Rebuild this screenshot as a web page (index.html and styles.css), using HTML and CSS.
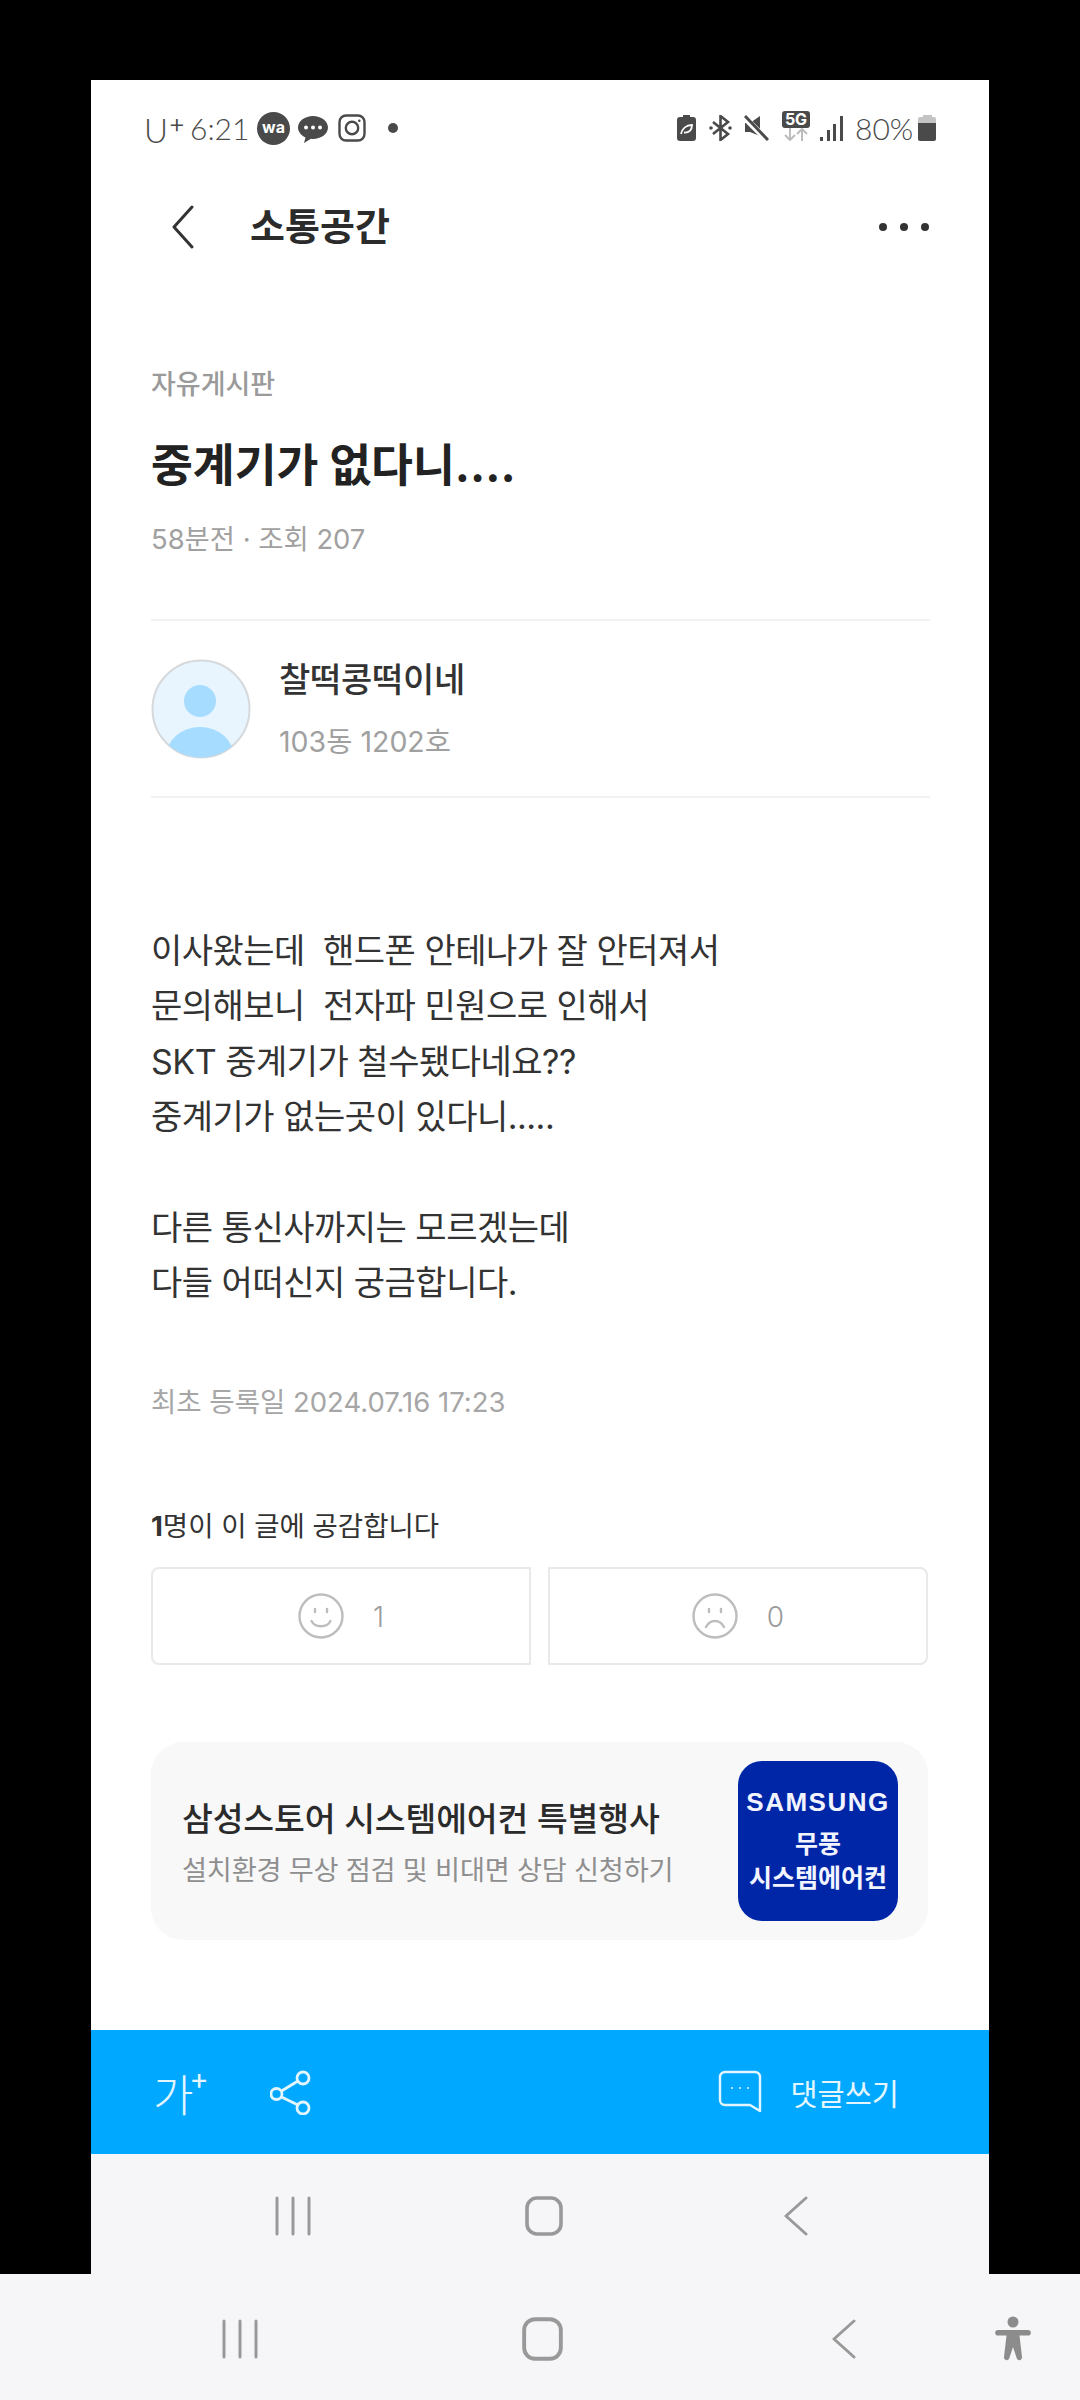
FILE: index.html
```html
<!DOCTYPE html>
<html lang="ko">

<head>
    <meta charset="UTF-8">
    <meta name="viewport" content="width=device-width, initial-scale=1.0">
    <title>소통공간</title>
    <link rel="stylesheet" href="styles.css">
</head>

<body>

    <div class="screen">

        <div class="status-bar">
            <div class="status-left">
                <span class="carrier">U<span class="carrier-plus">+</span></span>
                <span class="clock">6:21</span>
                <span class="wa-badge">wa</span>
                <svg class="talk-icon" viewBox="0 0 30 30">
                    <path d="M15 3C7 3 0 8 0 14.500C0 19 3.500 22.500 7.500 24.500L6 30L13 25.800C13.700 25.900 14.300 26 15 26C23 26 30 21 30 14.500S23 3 15 3Z" fill="#4a4a4a" />
                    <circle cx="8" cy="14.500" r="2" fill="#fff" />
                    <circle cx="15" cy="14.500" r="2" fill="#fff" />
                    <circle cx="22" cy="14.500" r="2" fill="#fff" />
                </svg>
                <svg class="insta-icon" viewBox="0 0 28 28" fill="none" stroke="#4a4a4a" stroke-width="2.400">
                    <rect x="1.500" y="1.500" width="25" height="25" rx="6.500" />
                    <circle cx="14" cy="14" r="6.200" />
                    <circle cx="21.300" cy="6.700" r="1.300" fill="#4a4a4a" stroke="none" />
                </svg>
                <span class="status-dot"></span>
            </div>
            <div class="status-right">
                <svg class="leaf-battery" viewBox="0 0 19 26">
                    <path d="M6 0H13V2H16A3 3 0 0 1 19 5V23A3 3 0 0 1 16 26H3A3 3 0 0 1 0 23V5A3 3 0 0 1 3 2H6Z" fill="#4a4a4a" />
                    <path d="M4 19C5 14 9 10 15 10C15 15 12 18 7 17.500" fill="none" stroke="#fff" stroke-width="1.800" />
                </svg>
                <svg class="bt-icon" viewBox="0 0 23 26" fill="none" stroke="#4a4a4a" stroke-width="2.600">
                    <path d="M4 7L19 19L11.500 25V1L19 7L4 19" />
                    <circle cx="2" cy="13" r="1.800" fill="#4a4a4a" stroke="none" />
                    <circle cx="21" cy="13" r="1.800" fill="#4a4a4a" stroke="none" />
                </svg>
                <svg class="mute-icon" viewBox="0 0 25 26">
                    <path d="M1 8H6L16 1V21L6 17H1Z" fill="#4a4a4a" />
                    <path d="M1 3L23 25" stroke="#fff" stroke-width="6" />
                    <path d="M1 1L24 25" stroke="#4a4a4a" stroke-width="3" />
                </svg>
                <div class="net-type">
                    <span class="net-label">5G</span>
                    <svg class="net-arrows" viewBox="0 0 28 13" fill="none" stroke="#bdbdbd" stroke-width="2">
                        <path d="M8 0V12M3 7L8 12L13 7" />
                        <path d="M20 13V1M15 6L20 1L25 6" />
                    </svg>
                </div>
                <div class="signal">
                    <span class="signal-bar bar-1"></span>
                    <span class="signal-bar bar-2"></span>
                    <span class="signal-bar bar-3"></span>
                    <span class="signal-bar bar-4"></span>
                </div>
                <span class="battery-text">80%</span>
                <div class="battery">
                    <span class="battery-cap"></span>
                    <span class="battery-empty"></span>
                    <span class="battery-full"></span>
                </div>
            </div>
        </div>

        <div class="app-header">
            <svg class="back-icon" viewBox="0 0 22 44" fill="none" stroke="#333" stroke-width="3" stroke-linecap="round" stroke-linejoin="round">
                <path d="M20 2L2 22L20 42" />
            </svg>
            <h1 class="app-title">소통공간</h1>
            <div class="more-dots">
                <span></span>
                <span></span>
                <span></span>
            </div>
        </div>

        <div class="content">
            <p class="category">자유게시판</p>
            <h2 class="post-title">중계기가 없다니....</h2>
            <p class="post-meta">58분전 · 조회 207</p>

            <div class="author">
                <svg class="avatar" viewBox="0 0 100 100">
                    <defs>
                        <clipPath id="avatar-clip">
                            <circle cx="50" cy="50" r="48.500" />
                        </clipPath>
                    </defs>
                    <circle cx="50" cy="50" r="48.500" fill="#e8f5fe" stroke="#d6d9dc" stroke-width="2" />
                    <circle cx="49" cy="42" r="16" fill="#a6dcff" />
                    <ellipse cx="49" cy="98" rx="34" ry="30" fill="#a6dcff" clip-path="url(#avatar-clip)" />
                </svg>
                <div class="author-info">
                    <p class="author-name">찰떡콩떡이네</p>
                    <p class="author-home">103동 1202호</p>
                </div>
            </div>

            <p class="post-body">이사왔는데  핸드폰 안테나가 잘 안터져서
문의해보니  전자파 민원으로 인해서
SKT 중계기가 철수됐다네요??
중계기가 없는곳이 있다니.....

다른 통신사까지는 모르겠는데
다들 어떠신지 궁금합니다.</p>

            <p class="post-date">최초 등록일 2024.07.16 17:23</p>

            <p class="like-summary"><strong>1</strong>명이 이 글에 공감합니다</p>
            <div class="reactions">
                <div class="reaction reaction-like">
                    <svg class="face-icon" viewBox="0 0 46 46" fill="none" stroke="#bdbdbd" stroke-width="2.400" stroke-linecap="round">
                        <circle cx="23" cy="23" r="21.500" />
                        <path d="M17 16V19M29 16V19" />
                        <path d="M13.500 28C17 35 29 35 32.500 28" />
                    </svg>
                    <span class="reaction-count">1</span>
                </div>
                <div class="reaction reaction-dislike">
                    <svg class="face-icon" viewBox="0 0 46 46" fill="none" stroke="#bdbdbd" stroke-width="2.400" stroke-linecap="round">
                        <circle cx="23" cy="23" r="21.500" />
                        <path d="M17 16V19M29 16V19" />
                        <path d="M14 34C18 26 28 26 32 34" />
                    </svg>
                    <span class="reaction-count">0</span>
                </div>
            </div>

            <div class="promo-card">
                <div class="promo-text">
                    <p class="promo-title">삼성스토어 시스템에어컨 특별행사</p>
                    <p class="promo-sub">설치환경 무상 점검 및 비대면 상담 신청하기</p>
                </div>
                <div class="promo-thumb">
                    <span class="thumb-brand">SAMSUNG</span>
                    <span class="thumb-line">무풍</span>
                    <span class="thumb-line">시스템에어컨</span>
                </div>
            </div>
        </div>

        <div class="action-bar">
            <div class="font-size-btn">
                <span class="font-size-char">가</span>
                <span class="font-size-plus">+</span>
            </div>
            <svg class="share-icon" viewBox="0 0 42 46" fill="none" stroke="#e3f6ff" stroke-width="2.800">
                <circle cx="33" cy="9" r="6" />
                <circle cx="6.500" cy="25" r="5.500" />
                <circle cx="33" cy="39" r="6" />
                <path d="M11.500 22L28 12M11.500 28L28 36" />
            </svg>
            <div class="comment-btn">
                <svg class="comment-icon" viewBox="0 0 44 44" fill="none" stroke="#e3f6ff" stroke-width="2.400" stroke-linejoin="round">
                    <path d="M7 2H37A5 5 0 0 1 42 7V41L32 35H7A5 5 0 0 1 2 30V7A5 5 0 0 1 7 2Z" />
                    <circle cx="14" cy="18" r="1" fill="#e3f6ff" stroke="none" />
                    <circle cx="22" cy="18" r="1" fill="#e3f6ff" stroke="none" />
                    <circle cx="30" cy="18" r="1" fill="#e3f6ff" stroke="none" />
                </svg>
                <span class="comment-label">댓글쓰기</span>
            </div>
        </div>

        <div class="inner-nav">
            <svg class="nav-bars" viewBox="0 0 36 40" fill="none" stroke="#999" stroke-width="3" stroke-linecap="round">
                <path d="M2 2V38M18 2V38M34 2V38" />
            </svg>
            <svg class="nav-home" viewBox="0 0 38 40" fill="none" stroke="#999" stroke-width="3.600">
                <rect x="2" y="2" width="34" height="36" rx="10" />
            </svg>
            <svg class="nav-back" viewBox="0 0 24 40" fill="none" stroke="#999" stroke-width="3" stroke-linecap="round" stroke-linejoin="round">
                <path d="M22 2L2 20L22 38" />
            </svg>
        </div>
    </div>

    <div class="outer-nav">
        <svg class="nav-bars nav-big" viewBox="0 0 36 40" fill="none" stroke="#999" stroke-width="3" stroke-linecap="round">
            <path d="M2 2V38M18 2V38M34 2V38" />
        </svg>
        <svg class="nav-home nav-big" viewBox="0 0 38 40" fill="none" stroke="#999" stroke-width="3.600" preserveAspectRatio="none">
            <rect x="2" y="2" width="34" height="36" rx="10" />
        </svg>
        <svg class="nav-back nav-big" viewBox="0 0 24 40" fill="none" stroke="#999" stroke-width="3" stroke-linecap="round" stroke-linejoin="round">
            <path d="M22 2L2 20L22 38" />
        </svg>
        <svg class="a11y-icon" viewBox="0 0 36 46" fill="#8c8c8c">
            <circle cx="18" cy="6" r="5.500" />
            <path d="M3 14H33A2.800 2.800 0 0 1 33 19.600H24.500L27 41A2.800 2.800 0 0 1 22 43L18 31L14 43A2.800 2.800 0 0 1 9 41L11.500 19.600H3A2.800 2.800 0 0 1 3 14Z" />
        </svg>
    </div>

</body>

</html>
```

FILE: styles.css
```css
* {
    margin: 0;
    padding: 0;
    box-sizing: border-box;
    font-family: Inter, "Noto Sans CJK KR", sans-serif;
}


body {
    background-color: #000;
    width: 1080px;
    height: 2400px;
    overflow: hidden;
    padding-top: 80px;
}


.screen {
    width: 898px;
    height: 2194px;
    margin-left: 91px;
    background-color: #fff;
}


/* status bar */
.status-bar {
    height: 96px;
    padding: 0 53px 0 53px;
    display: flex;
    align-items: center;
    justify-content: space-between;
}


.status-left,
.status-right {
    display: flex;
    align-items: center;
}


.carrier,
.clock,
.battery-text {
    font-family: Lato, sans-serif;
    font-weight: 300;
    font-size: 30px;
    color: #4a4a4a;
}


.carrier {
    width: 46px;
    font-size: 33px;
}


.carrier-plus {
    font-size: 27px;
    vertical-align: 10px;
}


.clock {
    width: 67px;
}


.wa-badge {
    width: 33px;
    height: 33px;
    border-radius: 50%;
    background-color: #4a4a4a;
    color: #fff;
    font-size: 16px;
    font-weight: 700;
    line-height: 30px;
    text-align: center;
}


.talk-icon {
    width: 30px;
    height: 30px;
    margin-left: 8px;
}


.insta-icon {
    width: 28px;
    height: 28px;
    margin-left: 10px;
}


.status-dot {
    width: 10px;
    height: 10px;
    border-radius: 50%;
    background-color: #4a4a4a;
    margin-left: 22px;
}


.leaf-battery {
    width: 19px;
    height: 26px;
}


.bt-icon {
    width: 23px;
    height: 26px;
    margin-left: 13px;
}


.mute-icon {
    width: 25px;
    height: 26px;
    margin-left: 12px;
}


.net-type {
    width: 28px;
    margin-left: 13px;
    display: flex;
    flex-direction: column;
    margin-top: -4px;
}


.net-label {
    height: 17px;
    border-radius: 3px;
    background-color: #4a4a4a;
    color: #fff;
    font-size: 16px;
    font-weight: 700;
    line-height: 17px;
    text-align: center;
}


.net-arrows {
    width: 28px;
    height: 13px;
}


.signal {
    width: 23px;
    height: 25px;
    margin-left: 10px;
    display: flex;
    align-items: flex-end;
    justify-content: space-between;
}


.signal-bar {
    width: 3px;
    background-color: #4a4a4a;
}


.bar-1 {
    height: 4px;
}


.bar-2 {
    height: 11px;
}


.bar-3 {
    height: 17px;
}


.bar-4 {
    height: 25px;
}


.battery-text {
    margin-left: 12px;
    width: 57px;
}


.battery {
    width: 18px;
    height: 26px;
    margin-left: 6px;
    display: flex;
    flex-direction: column;
    align-items: center;
}


.battery-cap {
    width: 9px;
    height: 2px;
    background-color: #c4c4c4;
}


.battery-empty {
    width: 18px;
    height: 6px;
    background-color: #c4c4c4;
    border-radius: 2px 2px 0 0;
}


.battery-full {
    width: 18px;
    height: 18px;
    background-color: #4a4a4a;
    border-radius: 0 0 2px 2px;
}


/* app header */
.app-header {
    height: 102px;
    padding: 0 60px 0 81px;
    display: flex;
    align-items: center;
}


.back-icon {
    width: 22px;
    height: 44px;
}


.app-title {
    font-size: 38px;
    font-weight: 700;
    line-height: 50px;
    color: #2b2b2b;
    margin: -2px 0 0 56px;
    flex-grow: 1;
}


.more-dots {
    display: flex;
    gap: 13px;
}


.more-dots span {
    width: 8px;
    height: 8px;
    border-radius: 50%;
    background-color: #333;
}


/* post */
.content {
    height: 1752px;
    padding: 87px 61px 0 60px;
}


.category {
    font-size: 27px;
    font-weight: 500;
    line-height: 40px;
    color: #9a9a9a;
}


.post-title {
    font-size: 45.500px;
    font-weight: 700;
    line-height: 60px;
    color: #222;
    margin-top: 31px;
}


.post-meta {
    font-size: 27.400px;
    line-height: 40px;
    color: #a0a0a0;
    margin-top: 23px;
}


.author {
    height: 179px;
    margin: 60px -2px 0 0;
    border-top: 2px solid #f2f2f2;
    border-bottom: 2px solid #f2f2f2;
    display: flex;
    align-items: center;
    gap: 28px;
}


.avatar {
    width: 100px;
    height: 100px;
}


.author-info {
    padding-top: 3px;
}


.author-name {
    font-size: 34px;
    font-weight: 500;
    line-height: 44px;
    letter-spacing: -0.300px;
    color: #333;
}


.author-home {
    font-size: 28.500px;
    line-height: 40px;
    color: #a0a0a0;
    margin-top: 20px;
}


.post-body {
    font-size: 34px;
    line-height: 55.400px;
    letter-spacing: -0.500px;
    color: #333;
    white-space: pre-wrap;
    margin-top: 125px;
}


.post-date {
    font-size: 27.500px;
    line-height: 40px;
    color: #a6a6a6;
    margin-top: 71px;
}


.like-summary {
    font-size: 27.500px;
    line-height: 40px;
    color: #333;
    margin-top: 84px;
}


.reactions {
    display: flex;
    gap: 17px;
    margin-top: 21px;
}


.reaction {
    width: 380px;
    height: 98px;
    border: 2px solid #e9e9e9;
    display: flex;
    align-items: center;
    justify-content: center;
    gap: 29px;
}


.reaction-like {
    border-radius: 8px 0 0 8px;
}


.reaction-dislike {
    border-radius: 0 8px 8px 0;
}


.face-icon {
    width: 46px;
    height: 46px;
}


.reaction-count {
    font-size: 28px;
    font-weight: 300;
    color: #9a9a9a;
    padding-top: 3px;
}


.promo-card {
    height: 198px;
    margin-top: 77px;
    padding: 0 30px 0 31px;
    border-radius: 32px;
    background-color: #f8f8f9;
    display: flex;
    align-items: center;
    justify-content: space-between;
}


.promo-text {
    padding-top: 5px;
}


.promo-title {
    font-size: 33.500px;
    font-weight: 500;
    line-height: 46px;
    letter-spacing: -0.150px;
    color: #2b2b2b;
}


.promo-sub {
    font-size: 27.200px;
    line-height: 40px;
    letter-spacing: -0.200px;
    color: #8f8f8f;
    margin-top: 9px;
}


.promo-thumb {
    width: 160px;
    height: 160px;
    border-radius: 24px;
    background-color: #0026a8;
    color: #f2f4ff;
    display: flex;
    flex-direction: column;
    align-items: center;
    font-weight: 700;
    padding-top: 26px;
}


.thumb-brand {
    font-family: "Liberation Sans", sans-serif;
    font-size: 26px;
    font-weight: 700;
    line-height: 30px;
    letter-spacing: 1.500px;
    margin-bottom: 10px;
}


.thumb-line {
    font-size: 25px;
    line-height: 34px;
}


/* bottom bars */
.action-bar {
    height: 124px;
    padding: 0 90px 0 65px;
    background-color: #00a8ff;
    color: #e3f6ff;
    display: flex;
    align-items: center;
}


.font-size-btn {
    display: flex;
    width: 52px;
    height: 50px;
}


.font-size-char {
    font-size: 44px;
    font-weight: 300;
    line-height: 58px;
    margin-left: -3px;
}


.font-size-plus {
    font-size: 29px;
    font-weight: 400;
    line-height: 24px;
    margin-left: -4px;
}


.share-icon {
    width: 42px;
    height: 46px;
    margin-left: 62px;
}


.comment-btn {
    margin-left: auto;
    display: flex;
    align-items: center;
    gap: 28px;
}


.comment-icon {
    width: 44px;
    height: 44px;
}


.comment-label {
    font-size: 29.500px;
    color: #e3f6ff;
}


.inner-nav {
    height: 120px;
    padding: 4px 0 0 76px;
    background-color: #f6f6f8;
    display: grid;
    grid-template-columns: 251.500px 251.500px 251.500px;
    justify-items: center;
    align-items: center;
}


.nav-bars {
    width: 36px;
    height: 40px;
}


.nav-home {
    width: 38px;
    height: 40px;
}


.nav-back {
    width: 24px;
    height: 40px;
}


.outer-nav {
    height: 126px;
    padding: 4px 0 0 89px;
    background-color: #f6f6f8;
    display: grid;
    grid-template-columns: 302px 302px 302px 36px;
    justify-items: center;
    align-items: center;
}


.nav-big {
    height: 44px;
}


.outer-nav .nav-home {
    width: 41px;
}


.a11y-icon {
    width: 36px;
    height: 46px;
}
```
